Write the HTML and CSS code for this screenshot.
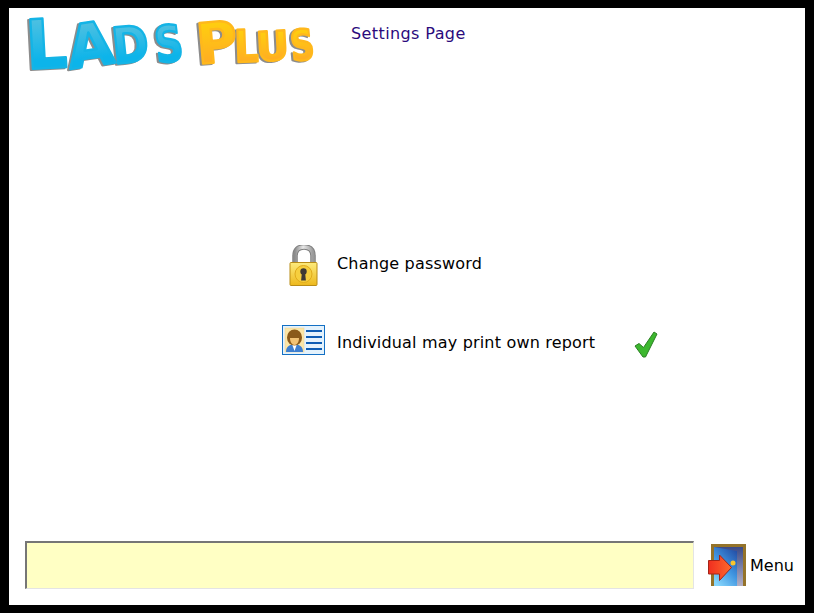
FILE: index.html
```html
<!DOCTYPE html>
<html lang="en">
<head>
  <meta charset="UTF-8">
  <title>Lads Plus - Settings Page</title>
  <link rel="stylesheet" href="styles.css">
</head>
<body>

  <div class="page">

    <div class="header">
      <svg class="logo" width="295" height="74" viewBox="0 0 295 74">
        <defs>
          <linearGradient id="blue" x1="0" y1="0.1" x2="0" y2="0.7">
            <stop offset="0" stop-color="#58c2e0"/>
            <stop offset="1" stop-color="#0cb4ea"/>
          </linearGradient>
          <linearGradient id="gold" x1="0" y1="0.15" x2="0" y2="0.9">
            <stop offset="0" stop-color="#ffd00e"/>
            <stop offset="1" stop-color="#ffa726"/>
          </linearGradient>
        </defs>
        <g class="logo-blue">
          <text transform="translate(0 61) rotate(-3) scale(0.95 1)" font-size="68">L</text>
          <text transform="translate(43 61) rotate(-8)" font-size="60">A</text>
          <text transform="translate(87 56) rotate(-6) scale(0.88 1)" font-size="50">D</text>
          <text transform="translate(130 55) rotate(-7) scale(0.78 1)" font-size="50">S</text>
        </g>
        <g class="logo-gold">
          <text transform="translate(171 56) rotate(-5)" font-size="56">P</text>
          <text transform="translate(208 54) rotate(-2) scale(0.85 1)" font-size="44">L</text>
          <text transform="translate(230 53) rotate(-3)" font-size="40">U</text>
          <text transform="translate(265 53) rotate(-6) scale(0.78 1)" font-size="42">S</text>
        </g>
      </svg>
      <div class="title">Settings Page</div>
    </div>

    <div class="main">
      <div class="option">
        <svg class="icon" width="30" height="42" viewBox="0 0 30 42">
          <defs>
            <linearGradient id="shackle" x1="0" y1="0" x2="1" y2="0">
              <stop offset="0" stop-color="#8c8c8c"/>
              <stop offset="0.45" stop-color="#e8e8e8"/>
              <stop offset="1" stop-color="#9a9a9a"/>
            </linearGradient>
            <linearGradient id="brass" x1="0" y1="0" x2="0" y2="1">
              <stop offset="0" stop-color="#fdeb7c"/>
              <stop offset="1" stop-color="#edb81c"/>
            </linearGradient>
          </defs>
          <path d="M6 19V11C6 4.500 9.500 2 15 2S24 4.500 24 11V19" fill="none" stroke="#808080" stroke-width="5.500"/>
          <path d="M6 19V11C6 4.500 9.500 2 15 2S24 4.500 24 11V19" fill="none" stroke="url(#shackle)" stroke-width="3.500"/>
          <rect x="1" y="17.500" width="27" height="23" rx="1" fill="url(#brass)" stroke="#b98c16"/>
          <circle cx="14.500" cy="29" r="8.500" fill="#f6cf3e" stroke="#e0ab1c"/>
          <circle cx="14.500" cy="26.500" r="3.200" fill="#3f3a34"/>
          <path d="M13 27h3l.9 8.500h-4.800z" fill="#3f3a34"/>
        </svg>
        <span class="label">Change password</span>
        <span></span>
      </div>

      <div class="option">
        <svg class="icon icon-card" width="43" height="30" viewBox="0 0 43 30">
          <rect x="0.500" y="0.500" width="42" height="29" fill="#e4f2fc" stroke="#1470c4"/>
          <rect x="3" y="3" width="19" height="24" fill="#fbe6a8" stroke="#f0d490" stroke-width="0.500"/>
          <path d="M4 27c0-5 3-7 7-8h3c4 1 7 3 7 8z" fill="#3e7fd0"/>
          <path d="M10 19h5l-2.500 7z" fill="#fff"/>
          <ellipse cx="12.500" cy="12.500" rx="7.500" ry="8" fill="#8b5a1a"/>
          <path d="M8 13c2 0 6 0 9 0 0 4-2 7-4.500 7S8 17 8 13z" fill="#f2c274"/>
          <path d="M24 6h16M24 12h16M24 18h16M24 24h16" stroke="#0d5cb4" stroke-width="2"/>
        </svg>
        <span class="label">Individual may print own report</span>
        <svg class="tick" width="24" height="27" viewBox="0 0 24 27">
          <path d="M1 15l4-2.500 4.500 4L20 1l3 2L11.500 26H9z" fill="#3cb72e" stroke="#2a7f22" stroke-linejoin="round"/>
        </svg>
      </div>
    </div>

    <div class="footer">
      <textarea class="message"></textarea>
      <div class="menu">
        <svg width="38" height="42" viewBox="0 0 38 42">
          <defs>
            <linearGradient id="doorway" x1="0.800" y1="0" x2="0.200" y2="1">
              <stop offset="0" stop-color="#2450a8"/>
              <stop offset="0.500" stop-color="#3f94e0"/>
              <stop offset="1" stop-color="#86d6fc"/>
            </linearGradient>
            <linearGradient id="wall" x1="0" y1="0" x2="0" y2="1">
              <stop offset="0" stop-color="#3a4a88"/>
              <stop offset="1" stop-color="#b4b0c4"/>
            </linearGradient>
            <linearGradient id="arrow" x1="0" y1="0" x2="1" y2="0">
              <stop offset="0" stop-color="#f02e20"/>
              <stop offset="1" stop-color="#ff6a2c"/>
            </linearGradient>
          </defs>
          <rect x="3" y="0" width="35" height="42" fill="#94732a"/>
          <rect x="6" y="3" width="29" height="39" fill="url(#wall)"/>
          <path d="M6 3l23 4v35H6z" fill="url(#doorway)"/>
          <circle cx="25" cy="19" r="2.500" fill="#fbc52c"/>
          <path d="M0.500 16.500h11V11l12 12.500-12 13V30h-11z" fill="url(#arrow)" stroke="#a42418"/>
        </svg>
        <span class="menu-text">Menu</span>
      </div>
    </div>

  </div>

</body>
</html>
```

FILE: styles.css
```css
html, body {
  height: 100%;
}

body {
  margin: 0;
  background: #000;
  font-family: "DejaVu Sans", Verdana, sans-serif;
  font-size: 16px;
  color: #000;
}

.page {
  box-sizing: border-box;
  height: 597px;
  margin: 8px 9px;
  background: #fff;
  display: flex;
  flex-direction: column;
}

.header {
  display: flex;
  align-items: flex-start;
  padding: 0 0 0 18px;
}

.logo {
  display: block;
  flex: none;
  overflow: visible;
}

.logo text {
  font-family: "DejaVu Sans", sans-serif;
  font-weight: bold;
  stroke-width: 2.500px;
  stroke-linejoin: round;
}

.logo-blue {
  fill: url(#blue);
  stroke: #14b4e6;
  filter: drop-shadow(-2px 1px 0 #8c8c8c);
}

.logo-gold {
  fill: url(#gold);
  stroke: #ffb81c;
  filter: drop-shadow(-2px 1px 0 #8c8c8c);
}

.title {
  margin: 16px 0 0 29px;
  color: #2b0a7c;
  letter-spacing: 0.4px;
}

.main {
  flex: 1;
  display: flex;
  flex-direction: column;
  gap: 37px;
  padding: 163px 0 0 273px;
}

.option {
  display: grid;
  grid-template-columns: 43px 285px 24px;
  column-gap: 12px;
  align-items: start;
}

.label {
  margin-top: 9px;
  letter-spacing: 0.18px;
}

.icon {
  display: block;
  justify-self: center;
}

.icon-card {
  margin-top: 1px;
}

.tick {
  display: block;
  margin-top: 7px;
}

.footer {
  display: flex;
  align-items: center;
  gap: 14px;
  padding: 0 10px 16px 16px;
}

.message {
  box-sizing: border-box;
  width: 669px;
  height: 48px;
  margin: 0;
  padding: 0;
  resize: none;
  background: #ffffc4;
  border-style: solid;
  border-color: #767676 #e4e4e4 #e4e4e4 #767676;
  border-width: 2px 1px 1px 2px;
  outline: none;
}

.menu {
  display: flex;
  align-items: center;
  gap: 4px;
}

.menu svg {
  display: block;
}
```
